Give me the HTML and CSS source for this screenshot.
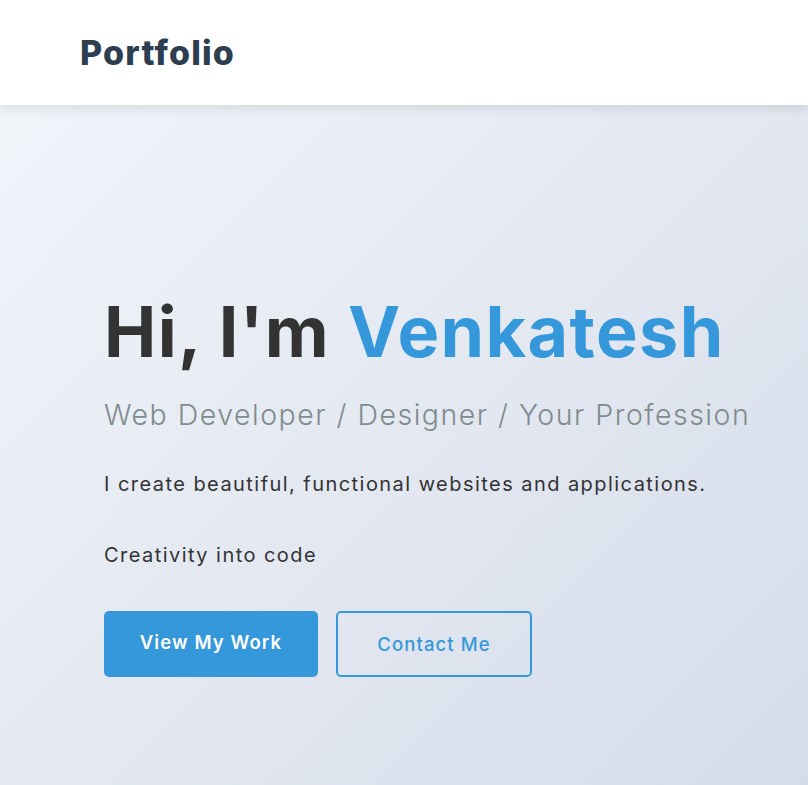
FILE: index.html
```html
<!DOCTYPE html>
<html lang="en">
<head>
<meta charset="utf-8">
<title>Portfolio</title>
<link rel="stylesheet" href="styles.css">
</head>
<body>
<header class="site-header">
  <div class="logo">Portfolio</div>
</header>
<section class="hero">
  <div class="hero-content">
    <h1 class="hero-title">Hi, I'm <span class="accent">Venkatesh</span></h1>
    <h2 class="hero-subtitle">Web Developer / Designer / Your Profession</h2>
    <p class="hero-text">I create beautiful, functional websites and applications.</p>
    <p class="hero-text tagline">Creativity into code</p>
    <div class="hero-buttons">
      <a class="btn btn-primary" href="#">View My Work</a>
      <a class="btn btn-outline" href="#">Contact Me</a>
    </div>
  </div>
</section>
</body>
</html>
```

FILE: styles.css
```css
* { box-sizing: border-box; margin: 0; padding: 0; }
html, body { height: 100%; }
body {
  font-family: Inter, "Open Sans", sans-serif;
  color: #333;
  background: #fff;
  overflow: hidden;
}
.site-header {
  position: relative;
  z-index: 2;
  height: 105px;
  background: #fff;
  display: flex;
  align-items: center;
  padding-left: 80px;
  box-shadow: 0 2px 12px rgba(0, 0, 0, 0.12);
}
.logo {
  font-family: Inter, sans-serif;
  font-weight: 800;
  font-size: 34px;
  color: #2c3e50;
  letter-spacing: 1.2px;
}
.hero {
  height: calc(100vh - 105px);
  background: linear-gradient(135deg, #f1f4f9 0%, #d5dce9 100%);
  padding: 192px 0 0 104px;
}
.hero-title {
  font-size: 70px;
  font-weight: 700;
  color: #333;
  line-height: 1;
  letter-spacing: 1.4px;
}
.accent { color: #3498db; }
.hero-subtitle {
  margin-top: 31px;
  font-size: 28.5px;
  font-weight: 300;
  color: #7f8c8d;
  line-height: 1.2;
  letter-spacing: 1.5px;
}
.hero-text {
  margin-top: 37px;
  font-size: 20px;
  font-weight: 400;
  color: #333;
  line-height: 1.5;
  letter-spacing: 1.45px;
}
.tagline { margin-top: 41px; }
.hero-buttons {
  margin-top: 41px;
  display: flex;
  gap: 18px;
}
.btn {
  display: flex;
  align-items: center;
  justify-content: center;
  height: 66px;
  border-radius: 5px;
  text-decoration: none;
  font-size: 18.5px;
  letter-spacing: 1.1px;
}
.btn-primary {
  width: 214px;
  background: #3498db;
  color: #fff;
  font-weight: 600;
  padding-bottom: 4px;
}
.btn-outline {
  width: 196px;
  border: 2px solid #3498db;
  color: #3498db;
  font-weight: 500;
}
```
